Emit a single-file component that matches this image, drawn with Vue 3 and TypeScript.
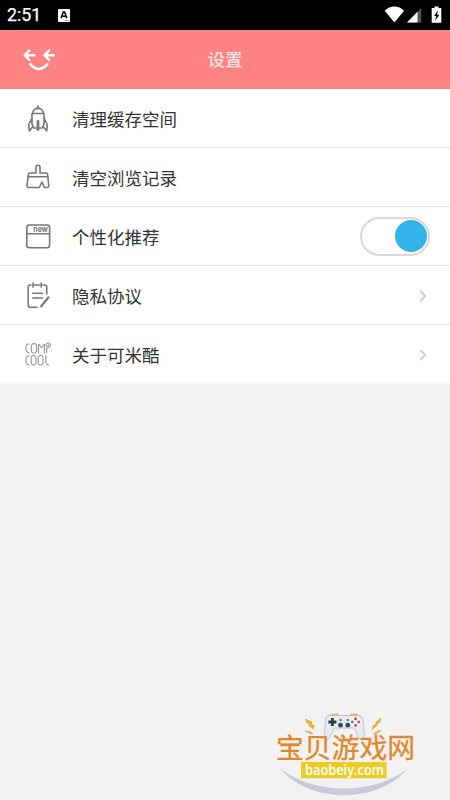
<script setup lang="ts">
import { ref } from 'vue'

type IconName = 'rocket' | 'broom' | 'window' | 'note' | 'brand'

interface SettingItem {
  icon: IconName
  label: string
  kind: 'action' | 'toggle' | 'link'
}

const items: SettingItem[] = [
  { icon: 'rocket', label: '清理缓存空间', kind: 'action' },
  { icon: 'broom', label: '清空浏览记录', kind: 'action' },
  { icon: 'window', label: '个性化推荐', kind: 'toggle' },
  { icon: 'note', label: '隐私协议', kind: 'link' },
  { icon: 'brand', label: '关于可米酷', kind: 'link' },
]

const personalized = ref(true)
</script>

<template>
  <div class="screen">
    <div class="status">
      <span class="time">2:51</span>
      <svg class="ime" width="12" height="13" viewBox="0 0 12 13">
        <rect width="12" height="13" rx="1" fill="#fff" />
        <path d="M3 9.3 5.3 3h1.2l2.4 6.3M4.1 7.3h3.7" fill="none" stroke="#000" stroke-width="1.5" />
        <path d="M7 11.5h3.5" stroke="#888" stroke-width=".8" />
      </svg>
      <svg class="signals" width="60" height="20" viewBox="0 0 60 20">
        <path d="M.7 5.8C6-.1 14.8-.1 20.1 5.8L10.4 17.6Z" fill="#fff" />
        <path d="M37.2 3v14.5H23Z" fill="#555" />
        <path d="M33.5 6.8v10.7H23Z" fill="#fff" />
        <path d="M50.5 1.5h4V3h2.8v14.7h-9.6V3h2.8Z" fill="#fff" />
        <path d="M54 5.2 50 11h2.2l-1 4.7 4.1-6H53Z" fill="#000" />
      </svg>
    </div>

    <header class="bar">
      <button class="back" aria-label="返回">
        <svg width="34" height="24" viewBox="0 0 34 24" fill="none" stroke="#fff" stroke-width="2.5" stroke-linecap="round" stroke-linejoin="round">
          <path d="M7.3 2.6 2.7 7.2l4.6 4.6M3.2 7.2h9M27.1 2.6l-4.6 4.6 4.6 4.6M23 7.2h8.8M8.2 16.2q8.6 9.6 17.2 0" />
        </svg>
      </button>
      <h1>设置</h1>
    </header>

    <main class="list">
      <div v-for="item in items" :key="item.label" class="row">
        <svg class="icon" width="28" height="30" viewBox="0 0 28 30" fill="none" stroke="#777" stroke-width="1.6" stroke-linecap="round" stroke-linejoin="round">
          <template v-if="item.icon === 'rocket'">
            <path d="M14 1.8v2.5M12.3 4.3h3.4M8.6 9.5c.2-2.9 2-5 5.4-5s5.2 2.1 5.4 5M8 9.5h12v10.7L18.3 24H9.7L8 20.2ZM8 14l-3.3 6.5.6 6.5 3.4-4.2M20 14l3.3 6.5-.6 6.5-3.4-4.2" />
            <path d="M14 17.5v8" stroke-width="2.8" />
          </template>
          <template v-else-if="item.icon === 'broom'">
            <path d="M12 10V4.3q0-2 2-2t2 2V10h6q1.5 0 1.6 1.5l1.2 11q0 2-1.8 2H20.3l-2.3-5.5-2.8 5.5H4.8q-2 0-1.8-2l1.3-11Q4.5 10 6 10ZM3.8 13.8h20.4" />
          </template>
          <template v-else-if="item.icon === 'window'">
            <rect x="2.8" y="3" width="22.8" height="22.8" rx="2.5" />
            <path d="M3 11.7h22.4" />
            <text class="new-label" x="9.3" y="9.6" textLength="14.5" lengthAdjust="spacingAndGlyphs">new</text>
          </template>
          <template v-else-if="item.icon === 'note'">
            <path d="M7 4H6Q4.2 4 4.2 5.8v18.4q0 2 2 2h6.8M10.5 4H15.5M19 4h1.7q2 0 2 2v7M9 2.1v4M17.2 2.1v4M8.8 12.2h9.7M8.8 17h9.7" />
            <path d="M17.2 25.3 24.5 16.3" stroke-width="2.2" />
          </template>
          <g v-else stroke="#888" stroke-width="1">
            <path d="M5 3.8Q2 3.5 2 6.5v3.3q0 3 3 3.2M9.3 3.7h1.4q2 0 2 2V11q0 2-2 2H9.3q-2 0-2-2V5.7q0-2 2-2ZM14.6 13.1V3.9l2.9 4.2 2.9-4.2v9.2M22.7 8.5V13" />
            <circle cx="24.3" cy="5.2" r="2.2" /><path d="M24.3 4.8v1M22.7 8.5l1.5-1.2" />
            <path d="M5 15.7q-3-.2-3 2.8V22q0 3 3 3M9.2 15.5h.8q2 0 2 2V23q0 2-2 2h-.8q-2 0-2-2v-5.5q0-2 2-2ZM16.2 15.5h.8q2 0 2 2V23q0 2-2 2h-.8q-2 0-2-2v-5.5q0-2 2-2ZM21.8 15.5v7q0 2.5 2.8 2.5" />
          </g>
        </svg>
        <span class="label">{{ item.label }}</span>
        <button
          v-if="item.kind === 'toggle'"
          class="switch"
          :class="{ on: personalized }"
          role="switch"
          :aria-checked="personalized"
          @click="personalized = !personalized"
        >
          <span class="knob"></span>
        </button>
        <svg v-else-if="item.kind === 'link'" class="chevron" width="8" height="12" viewBox="0 0 8 12">
          <path d="m1.3 1 5 5-5 5" fill="none" stroke="#ccc" stroke-width="1.8" />
        </svg>
      </div>
    </main>

    <svg class="watermark" width="160" height="100" viewBox="0 0 160 100">
      <path d="M16 69c34 26 92 26 126 0-29 35-97 35-126 0Z" fill="#c9cad8" />
      <path d="M67 16v-1.5h6V16M86 16v-1.5h6V16" fill="none" stroke="#eab04c" stroke-width="1.5" />
      <path d="M64 15.5h30q4 0 4.5 8l.8 12q-.2 5-3.7 4-2.7-1-4.5-8.5l-2.5-3H70.2l-3 4Q64.5 39 62 39.5q-3 .2-2.5-5L60.3 22q.4-6.5 3.7-6.5Z" fill="#e8e8ef" stroke="#b8b9c8" stroke-width=".8" />
      <path d="M67.4 18v8M63.4 22h8" stroke="#263f4a" stroke-width="2.8" />
      <g fill="#344954"><circle cx="75.5" cy="25.2" r="2.4" /><circle cx="82.8" cy="25.2" r="2.4" /><circle cx="75.5" cy="20" r="1" /><circle cx="82.8" cy="20" r="1" /></g>
      <circle cx="90.5" cy="22" r="5.2" fill="#fafafc" />
      <circle cx="90.5" cy="18.8" r="1.5" fill="#d9434d" /><circle cx="90.5" cy="25.2" r="1.5" fill="#d9434d" />
      <circle cx="87.3" cy="22" r="1.4" fill="#328fa8" /><circle cx="93.7" cy="22" r="1.4" fill="#d9434d" />
      <g fill="#f3b21c" stroke="#dc902f" stroke-width=".5">
        <path d="m40.5 19 6.5 3.3-.3 2.1 2.4 1-.7 3.6-4.4-3.2.7-1.8-2.8-1Z" />
        <path d="m116 18-5.5 4.8.8 1.2-3 1.5-1.2 3.7 5.5-4.1-.8-1.3 3-1.5Z" />
        <path d="m40 31.2 5 .2.4 1 1.5.1.6 1.8-3.3-1-.5-1Z" />
        <path d="m116.5 30.5-4.2.6-.4 1-1.7.3-1.5 1.9 4.2-1.2.6-1Z" />
      </g>
      <text class="wm-name" x="11" y="58" textLength="139">宝贝游戏网</text>
      <rect x="36" y="62" width="85.5" height="16.3" fill="#e9cd24" />
      <text class="wm-site" x="40" y="74.5" textLength="79" lengthAdjust="spacingAndGlyphs">baobeiy.com</text>
    </svg>
  </div>
</template>

<style>
body {
  margin: 0;
  background: #f2f2f2;
}
</style>

<style scoped>
.screen {
  position: relative;
  box-sizing: border-box;
  width: 100%;
  height: 100vh;
  overflow: hidden;
  background: #f2f2f2;
  font-family: 'Noto Sans CJK SC', sans-serif;
}
.status {
  display: flex;
  align-items: center;
  box-sizing: border-box;
  height: 30px;
  padding: 0 6px 0 7px;
  background: #000;
  color: #fff;
}
.time {
  width: 51px;
  font: 400 17.8px/30px Roboto, sans-serif;
  -webkit-text-stroke: 0.25px #fff;
}
.signals {
  margin-left: auto;
  margin-top: -1px;
}
.bar {
  display: grid;
  grid-template-columns: 60px 1fr 60px;
  align-items: center;
  height: 59px;
  background: #ff8383;
  color: #fff;
}
.bar h1 {
  margin: 0;
  padding-bottom: 2px;
  text-align: center;
  font-size: 17.5px;
  line-height: 24px;
  font-weight: 500;
  color: #ffe4e4;
}
.back {
  display: flex;
  padding: 0 0 0 22px;
  border: 0;
  background: none;
}
.back svg {
  flex: none;
}
.row {
  display: flex;
  align-items: center;
  box-sizing: border-box;
  height: 59px;
  padding: 2px 20px 0 24px;
  border-bottom: 1px solid #e4e4e4;
  background: #fff;
}
.row:last-child {
  border-bottom-color: #f8f8f8;
}
.label {
  margin-left: 20px;
  font-size: 17.5px;
  line-height: 26px;
  color: #333;
}
.new-label {
  fill: #666;
  stroke: none;
  font: 600 7.5px Inter, sans-serif;
}
.chevron {
  margin-left: auto;
  margin-right: 3px;
}
.switch {
  display: flex;
  align-items: center;
  box-sizing: border-box;
  width: 70px;
  height: 39px;
  margin: -2px 0 0 auto;
  padding: 0 1px;
  border: 2px solid #d8d8d8;
  border-radius: 20px;
  background: #fff;
}
.switch.on {
  justify-content: flex-end;
}
.knob {
  width: 32px;
  height: 32px;
  border-radius: 50%;
  background: #33b4eb;
}
.switch:not(.on) .knob {
  background: #ccc;
}
.watermark {
  position: absolute;
  right: 25px;
  bottom: 0;
}
.wm-name {
  font: 400 27.8px 'Noto Sans CJK SC', sans-serif;
  fill: #df892e;
  stroke: #df892e;
  stroke-width: 0.3px;
}
.wm-site {
  font: 600 14px 'Open Sans', sans-serif;
  fill: #fff;
}
</style>
